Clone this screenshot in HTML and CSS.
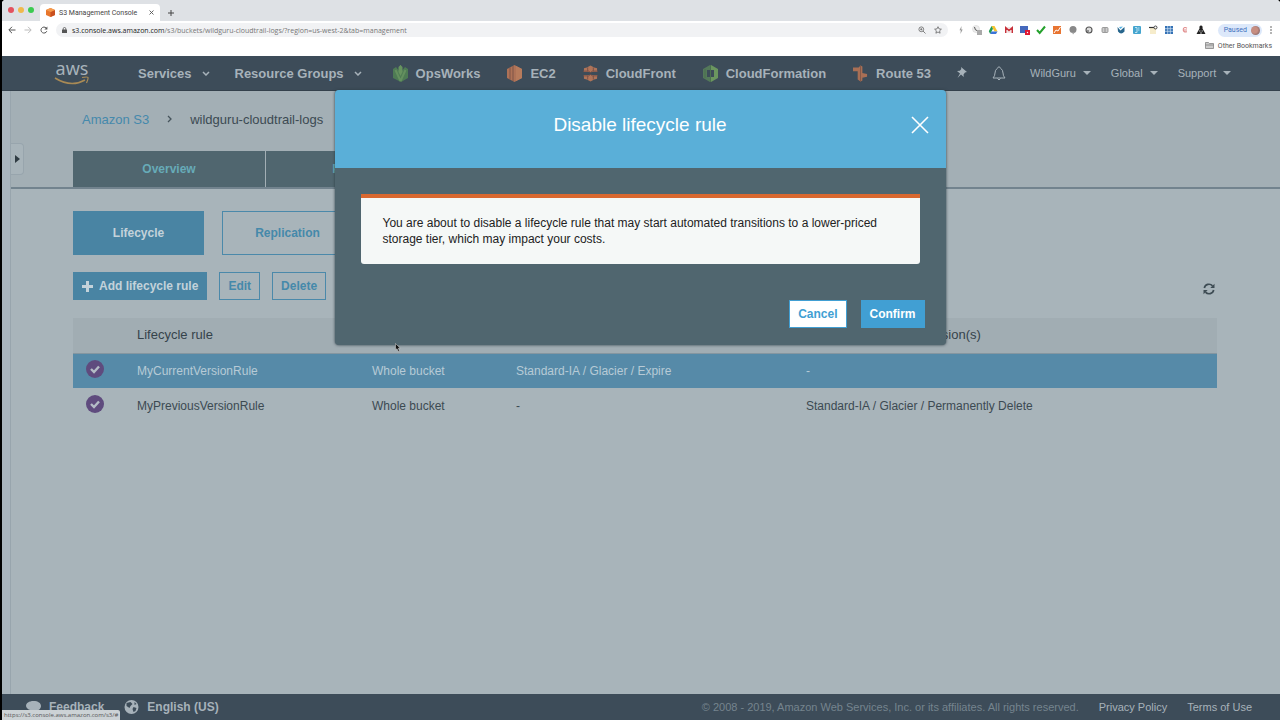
FILE: index.html
```html
<!DOCTYPE html>
<html lang="en">
<head>
<meta charset="utf-8">
<title>S3 Management Console</title>
<link rel="stylesheet" href="styles.css">
</head>
<body>
<div class="window">
  <header class="browser">
    <div class="tabstrip">
      <div class="lights"><i class="light red"></i><i class="light amber"></i><i class="light green"></i></div>
      <div class="browser-tab">
        <svg class="ico9" viewBox="0 0 9 9"><path d="M4.500 0L9 2v5L4.500 9 0 7V2z" fill="#e8762c"/><path d="M4.500 4L9 2v5L4.500 9z" fill="#c9501f"/><path d="M4.500 0L9 2 4.500 4 0 2z" fill="#f59a4c"/></svg>
        <span>S3 Management Console</span>
        <svg class="tab-close" viewBox="0 0 5 5"><path d="M.5.5l4 4M4.500.5l-4 4" stroke="#555" stroke-width=".9"/></svg>
      </div>
      <svg class="new-tab" viewBox="0 0 6 6"><path d="M3 0v6M0 3h6" stroke="#444" stroke-width="1"/></svg>
    </div>
    <div class="toolbar">
      <svg class="nav-ico" viewBox="0 0 8 8"><path d="M7.500 4H1M4 .8L.8 4 4 7.200" fill="none" stroke="#555"/></svg>
      <svg class="nav-ico" viewBox="0 0 8 8"><path d="M.5 4H7M4 .8L7.200 4 4 7.200" fill="none" stroke="#bbb"/></svg>
      <svg class="nav-ico" viewBox="0 0 8 8"><path d="M6.800 5.200A3 3 0 1 1 6.200 2" fill="none" stroke="#555"/><path d="M7.400.4v3H4.400z" fill="#555"/></svg>
      <div class="address">
        <svg class="lock" viewBox="0 0 5 6"><path d="M1.200 3V1.800a1.300 1.300 0 0 1 2.600 0V3" fill="none" stroke="#555" stroke-width=".8"/><rect y="2.500" width="5" height="3.500" rx=".5" fill="#555"/></svg>
        <span class="url"><b>s3.console.aws.amazon.com</b>/s3/buckets/wildguru-cloudtrail-logs/?region=us-west-2&amp;tab=management</span>
        <svg class="addr-ico" viewBox="0 0 8 8"><circle cx="3.300" cy="3.300" r="2.400" fill="none" stroke="#666" stroke-width=".8"/><path d="M5 5l2.500 2.500M2.200 3.300h2.200M3.300 2.200v2.200" stroke="#666" stroke-width=".8"/></svg>
        <svg class="addr-ico" viewBox="0 0 8 8"><path d="M4 .7l1 2.200 2.400.3-1.800 1.600.5 2.400L4 6 1.900 7.200l.5-2.400L.6 3.200 3 2.900z" fill="none" stroke="#555" stroke-width=".7"/></svg>
      </div>
      <div class="extensions">
        <svg viewBox="0 0 10 10"><path d="M5.500 1L3.500 5.200h1.300L4.400 9 6.700 4.500H5.300z" fill="#999"/></svg>
        <svg viewBox="0 0 10 10"><circle cx="4" cy="4" r="3.500" fill="#eee" stroke="#ccc" stroke-width=".5"/><path d="M2.500 2q0 3.500 3.500 4" fill="none" stroke="#444" stroke-width=".9"/><rect x="5" y="5" width="5" height="5" fill="#aaa"/></svg>
        <svg viewBox="0 0 10 10"><path d="M3.500 1h3L9.500 6.500h-3z" fill="#f6c12d"/><path d="M3.500 1L5 3.800 2.200 9 .8 6.300z" fill="#219b55"/><path d="M3.500 6.500h6L8 9H2.200z" fill="#3b74d8"/></svg>
        <svg viewBox="0 0 10 10"><path d="M1 2h8v6H1z" fill="#f3e6e6"/><path d="M1.700 8V2.500L5 5.500l3.300-3V8" fill="none" stroke="#c8303a" stroke-width="1.400"/></svg>
        <svg viewBox="0 0 10 10"><path d="M0 1h8v7H0z" fill="#4569bd"/><rect x="5" y="5" width="5" height="5" fill="#df1833"/><circle cx="7.500" cy="7.500" r=".7" fill="#fff"/></svg>
        <svg viewBox="0 0 10 10"><path d="M1 5l2.700 3L9 1.500" fill="none" stroke="#25a12c" stroke-width="2"/></svg>
        <svg viewBox="0 0 10 10"><path d="M1 1h8v8H1z" fill="#e87532"/><path d="M2 8l2-3 2 1 2.500-4" fill="none" stroke="#fff"/></svg>
        <svg viewBox="0 0 10 10"><circle cx="5" cy="4.500" r="3.500" fill="#888"/><path d="M4 7h3L5 9.500z" fill="#999"/></svg>
        <svg viewBox="0 0 10 10"><circle cx="5" cy="5" r="3" fill="#ddd" stroke="#555" stroke-width="1.100"/><circle cx="4" cy="6" r="1" fill="#777"/></svg>
        <svg viewBox="0 0 10 10"><rect x="2" y="2.500" width="6" height="5" rx="1" fill="#ccc" stroke="#888" stroke-width=".8"/><path d="M4 4h2M4 6h2" stroke="#777" stroke-width=".7"/></svg>
        <svg viewBox="0 0 10 10"><path d="M1.500 2l3 3.500L8.500 2v4.500Q5 10.500 2 6.500z" fill="#28668d"/><path d="M3 2l1.500 2L7 1.500" fill="#56b3e5"/></svg>
        <svg viewBox="0 0 10 10"><rect x="1" y="1" width="8" height="8" rx="1" fill="#45a5cf"/><path d="M3 2.500h2v5H3M6 3h1.500M6 5h1.500" fill="none" stroke="#d9f0fa" stroke-width=".8"/></svg>
        <svg viewBox="0 0 10 10"><path d="M2 3h6v6H2z" fill="#f6eccb"/><path d="M1 2.500h5" stroke="#333" stroke-width="1.200"/><circle cx="7.500" cy="2.500" r="1.500" fill="none" stroke="#444"/></svg>
        <svg viewBox="0 0 10 10"><path d="M1 1h8v8H1z" fill="#3471b5"/><path d="M1 3.700h8M1 6.300h8M3.700 1v8M6.300 1v8" stroke="#d3e4f4" stroke-width=".7"/></svg>
        <svg viewBox="0 0 10 10"><path d="M7 3.200Q4.500 1.500 3.300 4 2.800 7.500 7 6.800M4 5h3" fill="none" stroke="#e08a8a" stroke-width="1.100"/></svg>
        <svg viewBox="0 0 10 10"><path d="M5 .5q2 0 1.500 3L9.500 9H.5l3-5.500Q3 .5 5 .5z" fill="#222"/><path d="M3 6h1.500M5.500 6H7M4 8h2" stroke="#ddd" stroke-width=".8"/></svg>
      </div>
      <button class="profile">Paused <i class="avatar"></i></button>
      <svg class="kebab" viewBox="0 0 2 8"><circle cx="1" cy="1" r=".8"/><circle cx="1" cy="4" r=".8"/><circle cx="1" cy="7" r=".8"/></svg>
    </div>
    <div class="bookmarks">
      <svg class="folder" viewBox="0 0 9 7"><path d="M.5.5h3l1 1h4v5h-8zM.5 3h8" fill="#ccc" stroke="#777" stroke-width=".7"/></svg>
      <span>Other Bookmarks</span>
    </div>
  </header>

  <nav class="aws-nav">
    <a class="logo" href="#"><span>aws</span>
      <svg viewBox="0 0 36 9"><path d="M1 2Q17 12 31 4" fill="none" stroke="#a98a55" stroke-width="1.600"/><path d="M28 1.500q5.500-1 6 0T32.500 7" fill="none" stroke="#a98a55" stroke-width="1.200"/></svg></a>
    <div class="menus">
      <button>Services <svg class="chev" viewBox="0 0 8 5"><path d="M1 1l3 3 3-3"/></svg></button>
      <button>Resource Groups <svg class="chev" viewBox="0 0 8 5"><path d="M1 1l3 3 3-3"/></svg></button>
    </div>
    <div class="shortcuts">
      <a href="#"><svg viewBox="0 0 15 17"><path d="M0 4l3-2 4 5V0h1v7l4-5 3 2v9l-7 4-8-4z" fill="#4e7b54"/><path d="M7.500 16L2.500 5M7.500 16l5-11" stroke="#64905f" stroke-width="2"/><path d="M5.500 2L7.500 0l2 2v5l-2 4-2-4z" fill="#67935f"/></svg>OpsWorks</a>
      <a href="#"><svg viewBox="0 0 15 17"><path d="M0 4l7.500-4L15 4v9l-7.500 4L0 13z" fill="#ae7257"/><path d="M3 2.500v12M6 1v15" stroke="#7f5549"/><path d="M9 1l6 3v9l-6 3z" fill="#b77b5c"/></svg>EC2</a>
      <a href="#"><svg viewBox="0 0 16 17"><path d="M4 2l4-2 4 2 3 1v4H1V3zM1 10h14v4l-3 1-4 2-4-2-3-1z" fill="#af7459"/><path d="M0 6h6l2 1.500L10 6h6M0 11h6l2-1.500 2 1.500h6M5 2v4M5 11v4M11 2v4M11 11v4" fill="none" stroke="#765047"/></svg>CloudFront</a>
      <a href="#"><svg viewBox="0 0 15 17"><path d="M0 4l7-4v5H4v7h3v5l-7-4z" fill="#54795a"/><path d="M8 0l7 4v9l-7 4v-5h3V5H8z" fill="#6b965f"/><path d="M7.500 0v17M2 4v9" stroke="#4b704f"/></svg>CloudFormation</a>
      <a href="#"><svg viewBox="0 0 16 17"><path d="M0 2h6l2-2 2 1v7l5 1v3l-5 1v3l-2 1-3-2V6H0z" fill="#a96f55"/><path d="M8 0v17" stroke="#825949"/></svg>Route 53</a>
    </div>
    <svg class="pin" viewBox="0 0 12 12"><path d="M5 0l6 5-2 .6-1.500 2L7.800 10 5 7.600 1.500 11 4 6.500 1 4l2.800-.3L5.300 2z" fill="#a7b2ba"/></svg>
    <svg class="bell" viewBox="0 0 14 15"><path d="M1 12q2-2 2-5t2.300-4.600Q7-.8 8.700 2.400 11 4 11 7t2 5zM5.500 12.500q1.500 3 3 0" fill="none" stroke="#a7b2ba"/></svg>
    <div class="account">
      <button>WildGuru <i class="caret"></i></button>
      <button>Global <i class="caret"></i></button>
      <button>Support <i class="caret"></i></button>
    </div>
  </nav>

  <div class="console">
    <aside class="rail"></aside>
    <main class="page">
      <button class="rail-toggle" aria-label="Open side panel"><i></i></button>
      <div class="page-head">
        <div class="crumbs"><a href="#">Amazon S3</a><svg viewBox="0 0 5 8"><path d="M1 1l3 3-3 3" fill="none" stroke="#46545c" stroke-width="1.300"/></svg><span>wildguru-cloudtrail-logs</span></div>
        <div class="tabs"><button>Overview</button><button>Properties</button><button>Permissions</button><button>Management</button></div>
      </div>
      <div class="page-body">
        <div class="subtabs"><button class="btn solid">Lifecycle</button><button class="btn">Replication</button></div>
        <div class="actions">
          <button class="btn solid add"><svg viewBox="0 0 11 11"><path d="M5.500 0v11M0 5.500h11" stroke="#c3d2da" stroke-width="3"/></svg>Add lifecycle rule</button>
          <button class="btn">Edit</button><button class="btn">Delete</button>
          <button class="refresh" aria-label="Refresh"><svg viewBox="0 0 12 12"><path d="M1.300 5A4.800 4.800 0 0 1 9.500 2.800M10.700 7A4.800 4.800 0 0 1 2.500 9.200" fill="none" stroke="#3e4c54" stroke-width="1.700"/><path d="M11.500.8V5H7.300zM.5 11.200V7h4.200z" fill="#3e4c54"/></svg></button>
        </div>
        <table>
          <colgroup><col class="c-check"><col class="c-name"><col class="c-scope"><col class="c-current"><col></colgroup>
          <thead><tr><th></th><th>Lifecycle rule</th><th>Applied to</th><th>Actions for current version(s)</th><th>Actions for previous version(s)</th></tr></thead>
          <tbody>
            <tr class="selected"><td><svg class="tick" viewBox="0 0 18 18"><circle cx="9" cy="9" r="9" fill="#5f4b7e"/><path d="M5 9l3 3 5-5.500" fill="none" stroke="#b4bcc6" stroke-width="2.400"/></svg></td><td>MyCurrentVersionRule</td><td>Whole bucket</td><td>Standard-IA / Glacier / Expire</td><td>-</td></tr>
            <tr><td><svg class="tick" viewBox="0 0 18 18"><circle cx="9" cy="9" r="9" fill="#5f4b7e"/><path d="M5 9l3 3 5-5.500" fill="none" stroke="#b4bcc6" stroke-width="2.400"/></svg></td><td>MyPreviousVersionRule</td><td>Whole bucket</td><td>-</td><td>Standard-IA / Glacier / Permanently Delete</td></tr>
          </tbody>
        </table>
      </div>
    </main>
    <div class="overlay">
      <section class="modal" role="dialog" aria-labelledby="dlg">
        <div class="modal-head"><h2 id="dlg">Disable lifecycle rule</h2><button class="close" aria-label="Close"><svg viewBox="0 0 18 18"><path d="M1 1l16 16M17 1L1 17" stroke="#fff" stroke-width="1.600"/></svg></button></div>
        <div class="modal-body">
          <p class="notice">You are about to disable a lifecycle rule that may start automated transitions to a lower-priced storage tier, which may impact your costs.</p>
          <div class="modal-actions"><button class="cancel">Cancel</button><button class="confirm">Confirm</button></div>
        </div>
      </section>
    </div>
  </div>

  <footer class="footer">
    <a class="strong" href="#"><svg viewBox="0 0 15 14"><path d="M7.500 1C12 1 15 3 15 6s-3 5-7 5l-5 2 1-3C-3 7 0 1 7.500 1z" fill="#a7b2ba"/></svg>Feedback</a>
    <a class="strong" href="#"><svg viewBox="0 0 14 14"><circle cx="7" cy="7" r="7" fill="#a7b2ba"/><path d="M2 3l4-1 2 2-2 2-1 2-3-2zM9 7l3 1-1 3-2 1-1-3zM10 2l2 2-2 1z" fill="#3d4c59"/></svg>English (US)</a>
    <span class="copyright">© 2008 - 2019, Amazon Web Services, Inc. or its affiliates. All rights reserved.</span>
    <a href="#">Privacy Policy</a><a href="#">Terms of Use</a>
  </footer>
  <div class="status">https://s3.console.aws.amazon.com/s3/#</div>
  <svg class="pointer" viewBox="0 0 6 9"><path d="M.5.5v6.500l1.500-1.300L3.200 8.500l1.300-.6L3.300 5.200h2z" fill="#111" stroke="#ddd" stroke-width=".5"/></svg>
</div>
</body>
</html>
```
FILE: styles.css
```css
* { box-sizing: border-box; }
html, body { margin: 0; height: 100%; overflow: hidden; background: #000; }
body { font-family: "Liberation Sans", Arial, sans-serif; font-size: 12px; color: #3c4a52; }
button { font: inherit; color: inherit; background: none; border: 0; padding: 0; }
a { color: inherit; text-decoration: none; }
svg { display: block; flex: none; }
.window { position: relative; height: 100%; margin-left: 2px; display: flex; flex-direction: column; background: #a8b4ba; border-radius: 4px 4px 0 0; overflow: hidden; }

/* Browser chrome */
.browser { font-family: Roboto, "Liberation Sans", sans-serif; font-size: 7px; background: #fff; color: #555; }
.tabstrip { display: flex; align-items: center; height: 21px; background: #dee1e5; padding-left: 6px; }
.lights { display: flex; gap: 4px; padding-bottom: 1px; }
.light { width: 6px; height: 6px; border-radius: 50%; }
.red { background: #e4525f; }
.amber { background: #f0b94c; }
.green { background: #3bcb51; }
.browser-tab { display: flex; align-items: center; gap: 4px; width: 120px; height: 17px; margin: 4px 8px 0 6px; padding: 0 6px; background: #fff; border-radius: 4px 4px 0 0; color: #444; white-space: nowrap; }
.ico9 { width: 9px; height: 9px; }
.tab-close { width: 5px; height: 5px; margin-left: auto; }
.new-tab { width: 6px; height: 6px; margin-top: 4px; }
.toolbar { display: flex; align-items: center; height: 18px; padding: 0 8px 0 6px; }
.nav-ico { width: 8px; height: 8px; margin-right: 8px; }
.address { flex: 1; display: flex; align-items: center; height: 14px; background: #f1f2f4; border-radius: 7px; padding: 0 6px; margin-right: 8px; }
.lock { width: 5px; height: 6px; margin-right: 5px; }
.url { flex: 1; font-size: 7px; font-family: "Open Sans", sans-serif; color: #777; }
.url b { font-weight: 400; color: #222; }
.addr-ico { width: 8px; height: 8px; margin-left: 8px; }
.extensions { display: flex; gap: 6px; }
.extensions svg { width: 10px; height: 10px; }
.profile { display: flex; align-items: center; gap: 4px; height: 13px; margin: 0 8px 0 12px; padding: 0 2px 0 6px; border-radius: 7px; background: #dce8fa; color: #3d70be; }
.avatar { width: 9px; height: 9px; border-radius: 50%; background: radial-gradient(circle at 40% 45%, #c78e82 40%, #62535b); }
.kebab { width: 2px; height: 8px; fill: #555; }
.bookmarks { display: flex; align-items: center; justify-content: flex-end; gap: 4px; height: 17px; padding: 0 8px 4px; }
.folder { width: 9px; height: 7px; }

/* Service navigation */
.aws-nav { display: flex; align-items: center; height: 35px; padding-left: 52px; background: #3d4c59; border-bottom: 1px solid #34414c; color: #a7b2ba; font-size: 13px; }
.logo { width: 36px; display: flex; flex-direction: column; align-items: center; font: 18px/14px "Noto Sans", sans-serif; }
.logo svg { width: 36px; height: 9px; margin-top: 1px; }
.menus, .shortcuts { display: flex; font-weight: 700; white-space: nowrap; }
.menus { gap: 25px; margin: 0 31px 0 48px; }
.menus button { display: flex; align-items: center; gap: 10px; }
.chev { width: 8px; height: 5px; fill: none; stroke: #a7b2ba; stroke-width: 1.5; }
.shortcuts { gap: 27px; }
.shortcuts a { display: flex; align-items: center; gap: 8px; }
.shortcuts svg { width: 15px; height: 17px; }
.pin { width: 12px; height: 12px; margin: 0 24px 0 25px; }
.bell { width: 14px; height: 15px; }
.account { display: flex; gap: 20px; margin-left: 24px; font-size: 11px; }
.account button { display: flex; align-items: center; gap: 7px; }
.caret { border: 4px solid transparent; border-top-color: #a7b2ba; border-bottom: 0; }

/* Console page */
.console { position: relative; flex: 1; display: flex; min-height: 0; }
.rail { width: 9px; border-right: 1px solid #98a5ad; background: #a8b4bc; }
.page { position: relative; flex: 1; min-width: 0; }
.rail-toggle { position: absolute; left: 0; top: 52px; width: 13px; height: 32px; display: flex; align-items: center; justify-content: center; background: #a8b4ba; border: 1px solid #98a5ad; border-left: 0; border-radius: 0 4px 4px 0; }
.rail-toggle i { border: 4px solid transparent; border-left: 5px solid #303c43; border-right: 0; }
.page-head { padding: 20px 62px 0; background: #a3afb5; border-bottom: 2px solid #72838e; }
.crumbs { display: flex; align-items: center; gap: 18px; height: 16px; margin: 0 0 24px 9px; font-size: 13px; }
.crumbs a { color: #4589ac; }
.crumbs svg { width: 5px; height: 8px; }
.tabs { display: flex; gap: 1px; }
.tabs button { width: 192px; height: 36px; background: #50666f; color: #67abb8; font-weight: 700; }
.page-body { padding: 22px 63px 0 62px; }
.btn { height: 28px; padding: 0 8px; border: 1px solid #4b89aa; color: #4589aa; font-weight: 700; }
.solid { background: #4984a3; color: #c3d2da; border-color: #4984a3; }
.subtabs { display: flex; gap: 18px; }
.subtabs .btn { width: 131px; height: 44px; }
.actions { display: flex; gap: 12px; margin: 17px 0 18px; }
.add { display: flex; align-items: center; gap: 6px; }
.add svg { width: 11px; height: 11px; }
.refresh { margin: 6px 2px 0 auto; }
.refresh svg { width: 12px; height: 12px; }
table { width: 100%; table-layout: fixed; border-collapse: collapse; }
.c-check { width: 64px; }
.c-name { width: 235px; }
.c-scope { width: 144px; }
.c-current { width: 290px; }
th { height: 35px; padding: 0 0 2px; background: #a1adb3; border-bottom: 1px solid #8596a0; text-align: left; font-size: 13px; font-weight: 400; color: #35434b; }
td { height: 35px; padding: 0; }
.selected { background: #568aa8; color: #b7cad6; }
.tick { width: 18px; height: 18px; margin: 0 0 4px 13px; }

/* Dialog */
.overlay { position: absolute; inset: -1px 2px 0 0; display: flex; justify-content: center; align-items: flex-start; }
.modal { width: 611px; border-radius: 4px; background: #50666f; box-shadow: 0 0 3px #2d3c45; overflow: hidden; }
.modal-head { display: flex; align-items: center; height: 78px; padding: 0 17px 8px 35px; background: #5aafd8; color: #fff; }
.modal-head h2 { flex: 1; margin: 0; font-size: 19px; font-weight: 400; text-align: center; }
.close svg { width: 18px; height: 18px; }
.modal-body { padding: 26px 26px 17px; }
.notice { margin: 0 0 36px; padding: 17px 22px; background: #f5f8f7; border-top: 4px solid #d96830; border-radius: 0 0 3px 3px; color: #222; font-size: 12px; line-height: 16px; }
.modal-actions { display: flex; justify-content: flex-end; gap: 14px; margin-right: -5px; }
.modal-actions button { height: 28px; padding: 0 8px; border: 1px solid #419fd3; font-weight: 700; }
.cancel { background: #fff; color: #419fd3; }
.modal-actions .confirm { background: #419fd3; color: #fff; }

/* Footer */
.footer { display: flex; align-items: center; gap: 20px; height: 26px; padding: 0 28px 0 24px; background: #3d4c59; color: #a7b2ba; font-size: 11px; white-space: nowrap; }
.strong { display: flex; align-items: center; gap: 8px; font-size: 12px; font-weight: 700; }
.strong svg { width: 15px; height: 14px; }
.copyright { margin-left: auto; color: #75848e; }
.status { position: absolute; left: 0; bottom: 0; height: 10px; padding: 0 2px; background: #ccd2d5; color: #555; border-radius: 0 2px 0 0; font: 6px/10px "Open Sans", sans-serif; }
.pointer { position: absolute; left: 393px; top: 343px; width: 6px; height: 9px; }
```
